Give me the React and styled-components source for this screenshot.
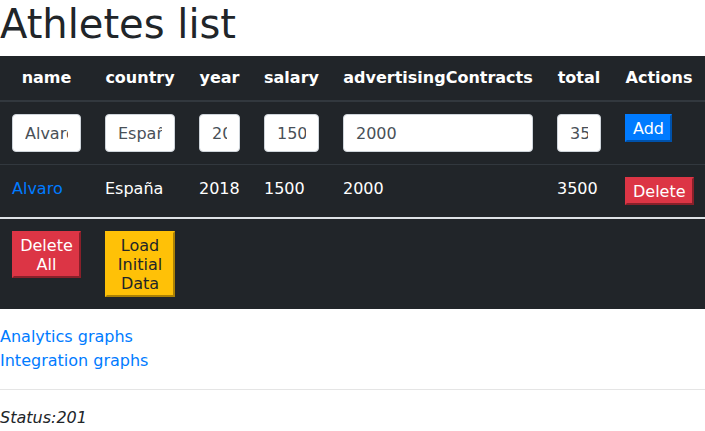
import React from "react";
import styled, { createGlobalStyle } from "styled-components";

const Global = createGlobalStyle`
  html, body { margin: 0; padding: 0; background: #fff; }
  body {
    font-family: "DejaVu Sans", sans-serif;
    font-size: 16px;
    line-height: 1.5;
    color: #212529;
  }
  * { box-sizing: border-box; }
`;

const Title = styled.h1`
  margin: 0 0 8px;
  font-size: 40px;
  font-weight: 500;
  line-height: 1.2;
`;

const Table = styled.table`
  width: 705px;
  table-layout: fixed;
  border-collapse: collapse;
  background: #212529;
  color: #fff;
  margin-bottom: 16px;
`;

const HeadCell = styled.th`
  padding: 10px 12px;
  font-weight: bold;
  text-align: center;
  vertical-align: bottom;
  border-bottom: 2px solid #32383e;
  white-space: nowrap;
`;

const Cell = styled.td`
  padding: 12px;
  vertical-align: top;
  text-align: left;
  border-top: ${(p) => (p.$heavy ? "2px solid #dee2e6" : "1px solid #32383e")};
`;

const Row = styled.tr``;

const Input = styled.input`
  display: block;
  width: 100%;
  height: 38px;
  padding: 6px 12px;
  font-family: "DejaVu Sans", sans-serif;
  font-size: 16px;
  line-height: 1.5;
  color: #495057;
  background: #fff;
  border: 1px solid #ced4da;
  border-radius: 4px;
  outline: none;
`;

const colors = {
  primary: ["#007bff", "#fff"],
  danger: ["#dc3545", "#fff"],
  warning: ["#ffc107", "#212529"],
};

const Button = styled.button`
  font-family: "DejaVu Sans", sans-serif;
  font-size: 16px;
  line-height: 19px;
  padding: 3px 6px 2px;
  margin: 0;
  background: ${(p) => colors[p.$variant][0]};
  color: ${(p) => colors[p.$variant][1]};
  border: 2px outset ${(p) => colors[p.$variant][0]};
  border-radius: 0;
  cursor: pointer;
  text-align: center;
`;

const NameLink = styled.a`
  color: #007bff;
  text-decoration: none;
`;

const Links = styled.nav`
  display: flex;
  flex-direction: column;
  align-items: flex-start;
`;

const NavLink = styled.a`
  color: #007bff;
  text-decoration: none;
  line-height: 24px;
`;

const Rule = styled.hr`
  margin: 16px 0;
  border: 0;
  border-top: 1px solid rgba(0, 0, 0, 0.1);
`;

const Status = styled.p`
  margin: 0;
  font-style: italic;
`;

const widths = [93, 94, 65, 79, 214, 68, 92];
const headers = ["name", "country", "year", "salary", "advertisingContracts", "total", "Actions"];

export default function App() {
  return (
    <>
      <Global />
      <Title>Athletes list</Title>
      <Table>
        <colgroup>
          {widths.map((w, i) => (
            <col key={i} style={{ width: w }} />
          ))}
        </colgroup>
        <thead>
          <Row>
            {headers.map((h) => (
              <HeadCell key={h}>{h}</HeadCell>
            ))}
          </Row>
        </thead>
        <tbody>
          <Row>
            <Cell><Input defaultValue="Alvaro" /></Cell>
            <Cell><Input defaultValue="España" /></Cell>
            <Cell><Input defaultValue="2018" /></Cell>
            <Cell><Input defaultValue="1500" /></Cell>
            <Cell><Input defaultValue="2000" /></Cell>
            <Cell><Input defaultValue="3500" /></Cell>
            <Cell><Button $variant="primary">Add</Button></Cell>
          </Row>
          <Row>
            <Cell><NameLink href="#">Alvaro</NameLink></Cell>
            <Cell>España</Cell>
            <Cell>2018</Cell>
            <Cell>1500</Cell>
            <Cell>2000</Cell>
            <Cell>3500</Cell>
            <Cell><Button $variant="danger">Delete</Button></Cell>
          </Row>
          <Row>
            <Cell $heavy><Button $variant="danger">Delete All</Button></Cell>
            <Cell $heavy><Button $variant="warning">Load Initial Data</Button></Cell>
            <Cell $heavy />
            <Cell $heavy />
            <Cell $heavy />
            <Cell $heavy />
            <Cell $heavy />
          </Row>
        </tbody>
      </Table>
      <Links>
        <NavLink href="#">Analytics graphs</NavLink>
        <NavLink href="#">Integration graphs</NavLink>
      </Links>
      <Rule />
      <Status>Status:201</Status>
    </>
  );
}
